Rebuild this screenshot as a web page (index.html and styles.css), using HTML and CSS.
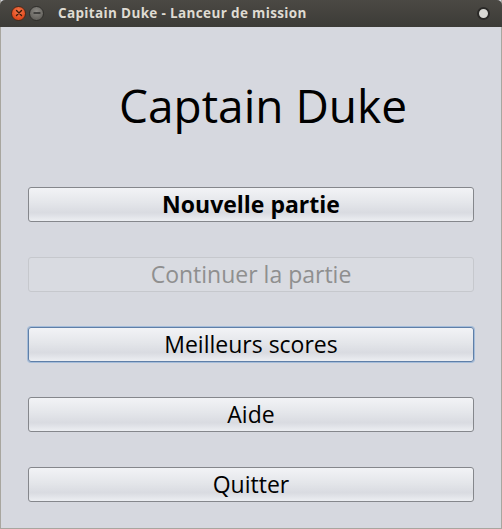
FILE: index.html
```html
<!DOCTYPE html>
<html lang="fr">
<head>
<meta charset="utf-8">
<title>Capitain Duke - Lanceur de mission</title>
<link rel="stylesheet" href="styles.css">
</head>
<body>
<div class="window">
  <div class="titlebar">
    <div class="controls">
      <span class="ctl close">
        <svg width="8" height="8" viewBox="0 0 8 8"><path d="M1.5 1.5 L6.5 6.5 M6.5 1.5 L1.5 6.5" stroke="#3a1a0a" stroke-width="1.4" stroke-linecap="round"/></svg>
      </span>
      <span class="ctl minimize">
        <svg width="8" height="8" viewBox="0 0 8 8"><path d="M1 4 L7 4" stroke="#2e2e2c" stroke-width="1.4" stroke-linecap="round"/></svg>
      </span>
    </div>
    <div class="wtitle">Capitain Duke - Lanceur de mission</div>
    <span class="dot"></span>
  </div>
  <div class="content">
    <h1 class="heading">Captain Duke</h1>
    <div class="menu">
      <button class="btn bold">Nouvelle partie</button>
      <button class="btn" disabled>Continuer la partie</button>
      <button class="btn focus">Meilleurs scores</button>
      <button class="btn">Aide</button>
      <button class="btn">Quitter</button>
    </div>
  </div>
</div>
</body>
</html>
```
FILE: styles.css
```css
html, body {
  margin: 0;
  padding: 0;
  background: #d6d8df;
}
.window {
  width: 502px;
  height: 529px;
  box-sizing: border-box;
  display: flex;
  flex-direction: column;
  border-left: 1px solid #a8a69f;
  border-right: 1px solid #a8a69f;
  border-bottom: 1px solid #a8a69f;
  background: #d6d8df;
  font-family: "Open Sans", "DejaVu Sans", sans-serif;
}
.titlebar {
  height: 27px;
  flex: none;
  margin: 0 -1px;
  background: linear-gradient(#4b4944, #3c3b37);
  border-radius: 5px 5px 0 0;
  display: flex;
  align-items: center;
  padding: 0 11px 1px;
  box-sizing: border-box;
}
.controls {
  display: flex;
  gap: 3px;
}
.ctl {
  width: 15px;
  height: 15px;
  border-radius: 50%;
  display: flex;
  align-items: center;
  justify-content: center;
  box-sizing: border-box;
}
.close {
  background: radial-gradient(circle at 50% 35%, #f37b4f, #e0481c 70%);
  border: 1px solid #4a2a1a;
}
.minimize {
  background: radial-gradient(circle at 50% 35%, #8c8a85, #66645f 70%);
  border: 1px solid #2f2e2b;
}
.wtitle {
  margin-left: 14px;
  color: #dfdbd2;
  font-weight: bold;
  font-size: 13.5px;
  flex: 1;
  letter-spacing: 0.35px;
}
.dot {
  width: 9px;
  height: 9px;
  border-radius: 50%;
  background: #d8d8d4;
  border: 2px solid #2a2927;
  margin-right: 1px;
}
.content {
  flex: 1;
  display: flex;
  flex-direction: column;
}
.heading {
  margin: 50px 0 0 24px;
  height: 110px;
  text-align: center;
  font-weight: normal;
  font-size: 46px;
  color: #000;
  line-height: 56px;
}
.menu {
  display: flex;
  flex-direction: column;
  gap: 35px;
  padding: 0 27px 0 27px;
}
.btn {
  height: 35px;
  box-sizing: border-box;
  border: 1px solid #85878c;
  border-radius: 3px;
  background: linear-gradient(#f2f3f6 0%, #e4e6ea 45%, #d9dbe1 75%, #eceef2 100%);
  font-family: "Open Sans", "DejaVu Sans", sans-serif;
  font-size: 23px;
  color: #000;
  padding: 0 0 2px;
  line-height: 30px;
}
.btn.bold {
  font-weight: bold;
}
.btn:disabled {
  border-color: #c6c8cd;
  background: #d9dbe1;
  color: #8f8f8f;
}
.btn.focus {
  border-color: #5f7fa8;
  box-shadow: 0 0 0 1px #a4bcd9;
}
```
